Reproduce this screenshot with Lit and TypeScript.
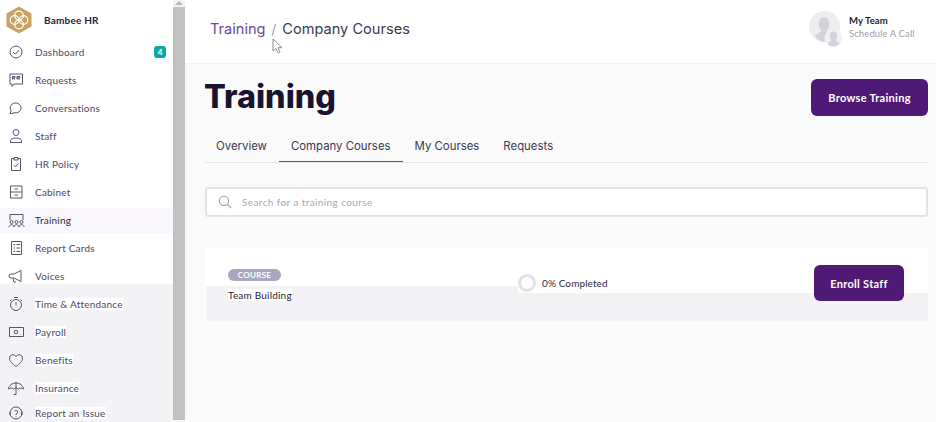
import { LitElement, css, html, svg } from 'lit'
import { customElement } from 'lit/decorators.js'

interface NavItem {
  label: string
  icon: ReturnType<typeof svg>
  active?: boolean
  badge?: string
  shaded?: boolean
  last?: boolean
}

const NAV: NavItem[] = [
  {
    label: 'Dashboard',
    badge: '4',
    icon: svg`<circle cx="10" cy="10" r="6"/><path d="M7 10l2.200 2.200L13.200 8"/>`,
  },
  {
    label: 'Requests',
    icon: svg`<path d="M4 4h12.500v10H8l-2 2.500V14H4z"/><path d="M6.500 9.500V6.500h2.500v1.500H6.500l2.500 1.500M11 9.500V6.500h2.800v1.500H11l2.800 1.500"/>`,
  },
  {
    label: 'Conversations',
    icon: svg`<path d="M4 15.500l1.200-2.600A5.500 5 0 1 1 8 14.700c-1.400.8-2.600 1-4 .8z"/>`,
  },
  {
    label: 'Staff',
    icon: svg`<circle cx="10" cy="6.500" r="3"/><path d="M4.500 16.500v-1.500c0-2 2-3 5.500-3s5.500 1 5.500 3v1.500z"/>`,
  },
  {
    label: 'HR Policy',
    icon: svg`<path d="M8 4.500H5.500v12h9v-12H12"/><path d="M8 3.500h4v2.500H8zM7.800 11l1.700 1.800 3-3.500"/>`,
  },
  {
    label: 'Cabinet',
    icon: svg`<path d="M4.500 4h11.500v12H4.500zM4.500 10h11.500M8.500 7h3.500M8.500 13h3.500"/>`,
  },
  {
    label: 'Training',
    active: true,
    icon: svg`<path d="M4 10V4.500h13V10"/><circle cx="5.500" cy="12" r="1.500"/><circle cx="10.500" cy="12" r="1.500"/><circle cx="15.500" cy="12" r="1.500"/><path d="M2.500 17l3-3 3 3M7.500 17l3-3 3 3M12.500 17l3-3 3 3"/>`,
  },
  {
    label: 'Report Cards',
    icon: svg`<path d="M5.500 3.500h10v13h-10zM7.500 6.500h1.500M10.500 6.500h3.500M7.500 10h1.500M10.500 10h3.500M7.500 13.500h1.500M10.500 13.500h3.500"/>`,
  },
  {
    label: 'Voices',
    icon: svg`<path d="M5 8h3l7-3.500v11L8 12H5a2 2 0 0 1 0-4zM7 12.500l1 3.500h2"/>`,
  },
  {
    label: 'Time & Attendance',
    shaded: true,
    icon: svg`<circle cx="10" cy="11" r="5.500"/><path d="M10 8v3.500M8 3.500h4M14.500 5.500l1.500 1.500M5.500 5.500L4 7"/>`,
  },
  {
    label: 'Payroll',
    shaded: true,
    icon: svg`<path d="M3.500 5.500h14v9h-14z"/><circle cx="10" cy="10" r="1.800"/><path d="M14.500 12.500h.5"/>`,
  },
  {
    label: 'Benefits',
    shaded: true,
    icon: svg`<path d="M10 16.500C6 13.500 3.500 11 3.500 8.200a3.400 3.400 0 0 1 6.500-1.500 3.400 3.400 0 0 1 6.500 1.500c0 2.800-2.500 5.300-6.500 8.300z"/>`,
  },
  {
    label: 'Insurance',
    shaded: true,
    icon: svg`<path d="M2.500 11C3 7.500 6 5 10 5s7 2.500 7.500 6c-2-1.300-3.500-1.300-5 0-1.600-1.200-3.400-1.200-5 0-1.500-1.300-3-1.300-5 0z"/><path d="M10 4v12.500H7.500"/>`,
  },
  {
    label: 'Report an Issue',
    shaded: true,
    last: true,
    icon: svg`<circle cx="10" cy="10" r="6"/><path d="M8.300 8.300A1.800 1.800 0 1 1 10 11v1M10 13.500v.8M4 9v3M16 9v3"/>`,
  },
]

const TABS = ['Overview', 'Company Courses', 'My Courses', 'Requests']

@customElement('app-root')
export class AppRoot extends LitElement {
  private renderNav(n: NavItem) {
    const cls = ['nav', n.active ? 'active' : '', n.shaded ? 'shaded' : '', n.last ? 'last' : ''].join(' ')
    return html`
      <a class=${cls}>
        <svg class="ico" viewBox="0 0 20 20">${n.icon}</svg>
        <span class="lbl">${n.label}</span>
        ${n.badge ? html`<span class="badge">${n.badge}</span>` : ''}
      </a>
    `
  }

  render() {
    return html`
      <aside class="side">
        <div class="brand">
          <svg class="logo" viewBox="0 0 26 28">
            <path class="hex" d="M13 0.500L25.500 7.500V20.500L13 27.500L0.500 20.500V7.500Z" />
            <g class="knot">
              <circle cx="13" cy="9.500" r="4.300" />
              <circle cx="13" cy="18.500" r="4.300" />
              <circle cx="8.500" cy="14" r="4.300" />
              <circle cx="17.500" cy="14" r="4.300" />
            </g>
          </svg>
          <span>Bambee HR</span>
        </div>
        <nav class="list">${NAV.map((n) => this.renderNav(n))}</nav>
      </aside>
      <div class="scroll">
        <div class="arrow"></div>
        <div class="thumb"></div>
      </div>
      <main class="main">
        <header class="top">
          <div class="crumbs">
            <span class="crumb-link">Training</span>
            <span class="crumb-sep">/</span>
            <span>Company Courses</span>
          </div>
          <div class="team">
            <svg class="avatars" viewBox="0 0 34 36">
              <circle cx="15.500" cy="15.500" r="15.500" fill="#eeeeef" />
              <ellipse cx="15" cy="13" rx="5.500" ry="7" fill="#d3d2d8" />
              <path fill="#d3d2d8" d="M6 26c1.500-3.500 5-4 6.500-6h5c1.500 2 4 2.500 5.500 4l-6 7c-4 0-8-2-10.500-5z" />
              <circle cx="24.500" cy="27" r="9" fill="#f1f1f2" />
              <ellipse cx="24.500" cy="25" rx="3.800" ry="4.500" fill="#d3d2d8" />
              <path fill="#d3d2d8" d="M18.500 33c.8-2 3-2.500 4-4h4c1 1.500 3.200 2 4 4-1.500 1.500-3.500 2.500-6 2.500s-4.500-1-6-2.500z" />
            </svg>
            <div class="team-text">
              <strong>My Team</strong>
              <span>Schedule A Call</span>
            </div>
          </div>
        </header>
        <div class="body">
          <div class="title-row">
            <h1>Training</h1>
            <button class="primary browse">Browse Training</button>
          </div>
          <div class="tabs">
            ${TABS.map((t) => html`<div class=${t === 'Company Courses' ? 'tab on' : 'tab'}>${t}</div>`)}
          </div>
          <div class="search">
            <svg class="glass" viewBox="0 0 16 16">
              <circle cx="6.800" cy="6.800" r="5.300" />
              <path d="M10.800 10.800L15 15" />
            </svg>
            <span>Search for a training course</span>
          </div>
          <section class="card">
            <div class="band left"></div>
            <div class="band right"></div>
            <div class="course">
              <span class="tag">COURSE</span>
              <span class="name">Team Building</span>
            </div>
            <div class="progress">
              <span class="ring"></span>
              <span class="pct">0% Completed</span>
            </div>
            <button class="primary enroll">Enroll Staff</button>
          </section>
        </div>
        <svg class="cursor" viewBox="0 0 11 16">
          <path d="M1 1v12l3-2.500 2 4.500 2-1-2-4.300h4z" />
        </svg>
      </main>
    `
  }

  static styles = css`
    :host {
      display: flex;
      width: 936px;
      height: 422px;
      overflow: hidden;
      background: #fafafb;
      font-family: 'Lato', 'Liberation Sans', sans-serif;
      color: #2d2a42;
    }
    .side {
      width: 173px;
      flex: none;
      height: 422px;
      overflow: hidden;
      background: linear-gradient(#fff 284px, #f3f3f6 284px);
    }
    .brand {
      height: 38px;
      box-sizing: border-box;
      padding: 2px 0 0 6px;
      display: flex;
      align-items: center;
      gap: 12px;
      font-size: 10px;
      font-weight: 700;
      letter-spacing: 0.2px;
      color: #25223a;
    }
    .logo {
      width: 26px;
      height: 28px;
      flex: none;
    }
    .hex {
      fill: #c9a262;
    }
    .knot circle {
      fill: none;
      stroke: #fff;
      stroke-width: 1.2;
    }
    .list {
      display: flex;
      flex-direction: column;
    }
    .nav {
      height: 28px;
      flex: none;
      display: flex;
      align-items: center;
      padding-left: 6px;
      font-size: 10px;
      letter-spacing: 0.2px;
      color: #4a4860;
    }
    .nav.active {
      height: 25px;
      margin: 2px 0 1px;
      padding-bottom: 1px;
      box-sizing: border-box;
      background: #faf7fc;
      color: #2d2a42;
    }
    .nav.shaded .lbl {
      background: #fff;
      box-shadow: 0 0 1px #fff;
    }
    .nav.last {
      height: 22px;
    }
    .ico {
      width: 20px;
      height: 20px;
      flex: none;
      margin-right: 9px;
      fill: none;
      stroke: #45435a;
      stroke-width: 0.9;
    }
    .badge {
      margin-left: auto;
      margin-right: 7px;
      width: 12px;
      height: 12px;
      border-radius: 3px;
      background: #14a8a3;
      color: #fff;
      font-size: 8px;
      font-weight: 700;
      display: flex;
      align-items: center;
      justify-content: center;
      letter-spacing: 0;
    }
    .scroll {
      width: 12px;
      flex: none;
      background: #f3f3f4;
      display: flex;
      flex-direction: column;
      align-items: stretch;
    }
    .arrow {
      height: 0;
      width: 0;
      margin: 1px auto 2px;
      border: 4px solid transparent;
      border-top: 0;
      border-bottom: 4px solid #b5b5b8;
    }
    .thumb {
      height: 413px;
      background: #c1c1c1;
    }
    .main {
      flex: 1;
      min-width: 0;
      display: flex;
      flex-direction: column;
      position: relative;
    }
    .top {
      height: 64px;
      flex: none;
      background: #fff;
      border-bottom: 1px solid #f3f3f4;
      box-sizing: border-box;
      display: flex;
      align-items: center;
      padding: 0 22px 7px 25px;
    }
    .crumbs {
      display: flex;
      gap: 6px;
      padding-top: 2px;
      font-family: 'Inter', 'Liberation Sans', sans-serif;
      font-size: 14.6px;
      color: #3c3950;
    }
    .crumb-link {
      color: #6b4a90;
    }
    .crumb-sep {
      color: #9a98a8;
      font-size: 13px;
      line-height: 18px;
    }
    .team {
      margin-left: auto;
      display: flex;
      align-items: center;
      gap: 6px;
    }
    .avatars {
      width: 34px;
      height: 36px;
      margin-top: 2px;
    }
    .team-text {
      display: flex;
      flex-direction: column;
      gap: 2px;
      margin-bottom: 2px;
      font-size: 9.5px;
      line-height: 11px;
      letter-spacing: 0.1px;
      width: 65px;
      white-space: nowrap;
    }
    .team-text strong {
      color: #25223a;
    }
    .team-text span {
      color: #9f9dae;
    }
    .body {
      flex: 1;
      padding: 15px 8px 0 20px;
      display: flex;
      flex-direction: column;
    }
    .title-row {
      display: flex;
      justify-content: space-between;
      align-items: flex-start;
    }
    h1 {
      margin: -1px 0 1px -1px;
      font-family: 'Inter', 'Liberation Sans', sans-serif;
      font-weight: 800;
      font-size: 32.3px;
      line-height: 38px;
      color: #18142f;
    }
    .primary {
      border: 0;
      border-radius: 6px;
      background: #4f1a76;
      color: #fff;
      font-family: 'Lato', 'Liberation Sans', sans-serif;
      font-weight: 700;
      letter-spacing: 0.3px;
      font-size: 11px;
      padding: 0;
    }
    .browse {
      width: 117px;
      height: 37px;
    }
    .tabs {
      display: flex;
      margin-top: 10px;
      height: 35px;
      border-bottom: 1px solid #e6e6ea;
    }
    .tab {
      padding: 10px 12px 0;
      height: 35px;
      line-height: 18px;
      font-family: 'Inter', 'Liberation Sans', sans-serif;
      font-size: 11.4px;
      color: #3c3950;
      box-sizing: border-box;
    }
    .tab:first-child {
      padding-left: 11px;
    }
    .tab.on {
      border-bottom: 1px solid #6b4a90;
    }
    .search {
      margin-top: 24px;
      height: 30px;
      box-sizing: border-box;
      border: 2px solid #e2e2e8;
      border-radius: 3px;
      background: #fff;
      display: flex;
      align-items: center;
      padding-left: 11px;
      gap: 10px;
      font-size: 10px;
      letter-spacing: 0.4px;
      color: #a9a7b6;
    }
    .glass {
      width: 14px;
      height: 14px;
      fill: none;
      stroke: #9a98a8;
      stroke-width: 1.2;
    }
    .card {
      position: relative;
      margin-top: 31px;
      height: 73px;
      background: #fff;
      border-radius: 2px;
      display: flex;
      align-items: center;
      padding: 0 24px 0 23px;
    }
    .band {
      position: absolute;
      bottom: 0;
      background: #f3f3f6;
    }
    .band.left {
      left: 1px;
      width: 312px;
      height: 35px;
    }
    .band.right {
      left: 313px;
      right: 0;
      height: 28px;
    }
    .course,
    .progress,
    .enroll {
      position: relative;
    }
    .course {
      width: 290px;
      display: flex;
      flex-direction: column;
      align-items: flex-start;
      gap: 8px;
      margin-top: 1px;
    }
    .tag {
      width: 53px;
      height: 12px;
      line-height: 12px;
      border-radius: 6px;
      background: #a8a7bf;
      color: #fff;
      font-size: 8px;
      font-weight: 700;
      text-align: center;
      letter-spacing: 0.3px;
    }
    .name {
      font-size: 10px;
      letter-spacing: 0.2px;
      color: #25223a;
      background: #fff;
      line-height: 12px;
    }
    .progress {
      display: flex;
      align-items: center;
      gap: 6px;
      margin-top: -3px;
      font-size: 10px;
      letter-spacing: 0.1px;
      color: #2d2a42;
    }
    .ring {
      width: 18px;
      height: 18px;
      box-sizing: border-box;
      border-radius: 50%;
      border: 3px solid #e2e2e6;
      background: #fff;
    }
    .pct {
      background: #fff;
    }
    .enroll {
      margin-left: auto;
      width: 90px;
      height: 36px;
      margin-top: -3px;
    }
    .cursor {
      position: absolute;
      left: 87px;
      top: 38px;
      width: 11px;
      height: 16px;
      fill: #fff;
      stroke: #77757f;
      stroke-width: 0.8;
    }
  `
}
